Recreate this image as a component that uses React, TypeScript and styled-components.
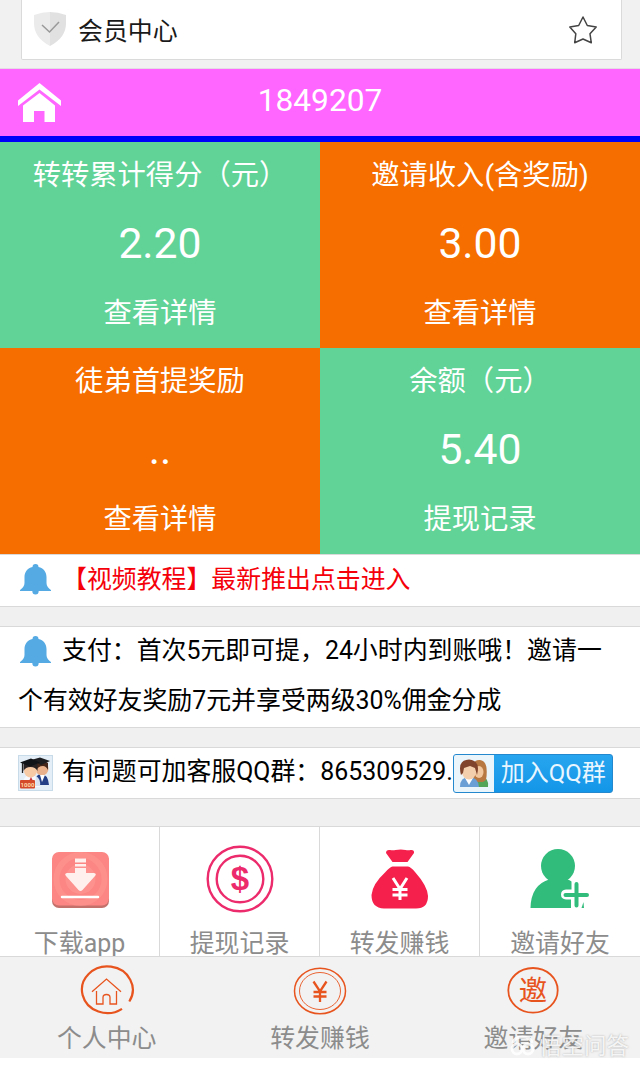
import React from 'react';
import styled, { createGlobalStyle } from 'styled-components';

const GlobalStyle = createGlobalStyle`
  * { box-sizing: border-box; }
  body {
    margin: 0;
    background: #fff;
    font-family: Roboto, "Noto Sans CJK SC", sans-serif;
    font-size: 24.9px;
    color: #000;
  }
  svg { display: block; flex: none; }
`;

const Page = styled.div`
  position: relative;
  width: 640px;
  height: 1067px;
  overflow: hidden;
  display: flex;
  flex-direction: column;
  background: #fff;
`;

const TopBar = styled.div`
  flex: none;
  height: 69px;
  padding: 0 18px 0 21px;
  background: #f1f1f1;
  border-bottom: 1px solid #e4dbe4;
`;

const AddressCard = styled.div`
  height: 60px;
  padding: 0 23px 0 12px;
  display: flex;
  align-items: center;
  background: #fff;
  border: 1px solid #dadada;
  border-top: 0;
  border-radius: 0 0 2px 2px;
  color: #1a1a1a;
`;

const AddressTitle = styled.span`
  flex: 1;
  margin-left: 12px;
  padding-top: 4px;
  line-height: 36px;
`;

const UserBar = styled.header`
  flex: none;
  height: 73px;
  padding: 0 18px;
  display: grid;
  grid-template-columns: 44px 1fr 44px;
  align-items: center;
  background: #ff66ff;
  border-bottom: 6px solid #0000fa;
`;

const UserId = styled.h1`
  margin: 0 0 3px;
  text-align: center;
  font-size: 31.7px;
  font-weight: 400;
  line-height: 40px;
  color: #fff;
`;

const TileGrid = styled.section`
  flex: none;
  display: grid;
  grid-template-columns: 1fr 1fr;
  grid-auto-rows: 206px;
`;

const Tile = styled.div<{ $color: string }>`
  padding-top: 14px;
  display: flex;
  flex-direction: column;
  align-items: center;
  background: ${(p) => p.$color};
  color: #fff;
  font-size: 28.3px;
  line-height: 40px;
`;

const TileValue = styled.strong`
  margin: 22px 0 26px;
  font-size: 42.7px;
  font-weight: 400;
  line-height: 50px;
`;

const Notice = styled.section<{ $height: number }>`
  flex: none;
  height: ${(p) => p.$height}px;
  margin-bottom: 20px;
  padding: 0 18px;
  background: #fff;
  border-top: 1px solid #d9d9d9;
  box-shadow: 0 1px 0 #d9d9d9;
  line-height: 50px;
  white-space: nowrap;
`;

const NoticeLine = styled.div<{ $color?: string }>`
  display: flex;
  align-items: center;
  height: 50px;
  color: ${(p) => p.$color || '#000'};
`;

const NoticeText = styled.span<{ $gap?: number; $lift?: number }>`
  margin-left: ${(p) => p.$gap ?? 9}px;
  padding-bottom: ${(p) => (p.$lift ?? 1) * 2}px;
`;

const Content = styled.div`
  flex: none;
  background: #f0f0f0;
`;

const JoinButton = styled.button`
  width: 160px;
  height: 39px;
  padding: 0;
  display: flex;
  align-items: center;
  overflow: hidden;
  background: linear-gradient(#27a5ee, #1496e8);
  border: 1px solid #2488cf;
  border-radius: 3px;
  color: #e9f6ff;
  font-family: inherit;
  font-size: 24px;
  line-height: 36px;
`;

const JoinLabel = styled.span`
  margin-left: 7px;
`;

const Shortcuts = styled.nav`
  height: 130px;
  margin-top: 28px;
  display: grid;
  grid-template-columns: repeat(4, 1fr);
  overflow: hidden;
  background: #fff;
  border-top: 1px solid #d9d9d9;
`;

const Shortcut = styled.a`
  padding-top: 18px;
  display: flex;
  flex-direction: column;
  align-items: center;
  color: #8c8c8c;
  line-height: 36px;
  border-right: 1px solid #d9d9d9;
  &:last-child { border-right: 0; }
`;

const ShortcutLabel = styled.span`
  margin-top: 9px;
`;

const TabBar = styled.nav`
  flex: none;
  height: 102px;
  display: grid;
  grid-template-columns: repeat(3, 1fr);
  background: #f2f2f2;
  border-top: 1px solid #d9d9d9;
`;

const Tab = styled.a`
  padding-top: 6px;
  display: flex;
  flex-direction: column;
  align-items: center;
  color: #8c8c8c;
  line-height: 36px;
`;

const TabLabel = styled.span`
  margin-top: 2px;
`;

const Watermark = styled.div`
  position: absolute;
  left: 509px;
  top: 1031px;
  display: flex;
  align-items: center;
  gap: 3px;
  color: rgba(255, 255, 255, 0.85);
  font-size: 22.5px;
  line-height: 30px;
  text-shadow: 0 0 2px rgba(150, 150, 150, 0.8);
`;

const Shield = () => (
  <svg width="32" height="35" viewBox="0 0 32 35">
    <path d="M0 3Q8 0 16 0V34C5 28 0 21 0 11Z" fill="#ebebeb" />
    <path d="M32 3Q24 0 16 0V34C27 28 32 21 32 11Z" fill="#e1e1e1" />
    <path d="M8 13l7.500 7L25 10" fill="none" stroke="#999" strokeWidth="1.500" />
  </svg>
);

const Star = () => (
  <svg width="30" height="30" viewBox="0 0 30 30">
    <path
      d="M15 2L19.300 10.500 28.200 12 22 18.800 23.300 27.800 15 24 6.700 27.800 7.800 18.800 1.800 12 10.700 10.500Z"
      fill="none" stroke="#444" strokeWidth="1.500" strokeLinejoin="round"
    />
  </svg>
);

const HomeSolid = () => (
  <svg width="44" height="40" viewBox="0 0 44 40">
    <path d="M0 17.500L21.500 0 43 17.500V23L21.500 6.500 0 23Z" fill="#fff" />
    <path d="M5 22.500L21.500 10 37 22.500V39H26.500V28H16V39H5Z" fill="#fff" />
  </svg>
);

const Bell = () => (
  <svg width="35" height="32" viewBox="0 0 35 32">
    <path
      d="M14.500 3a3 3 0 0 1 6 0C25.500 4 28.500 8 28.500 13V18.500C28.500 22.500 31 24.500 33 26V27H20.700a3.200 3.600 0 0 1-6.400 0H2V26C4 24.500 6.500 22.500 6.500 18.500V13C6.500 8 9.500 4 14.500 3Z"
      fill="#55aae4"
    />
  </svg>
);

const Graduates = () => (
  <svg width="35" height="36" viewBox="0 0 35 36">
    <rect x="0.500" y="0.500" width="34" height="35" fill="#e3eef7" stroke="#c8dbe8" />
    <path d="M16 30q1-11 7-11 7 0 8 11Z" fill="#243f86" />
    <circle cx="24" cy="14" r="6.500" fill="#e9b28c" />
    <path d="M17 16V8q7-5 13 0v7q-2-4-5-4-5 0-7 5Z" fill="#45261b" />
    <path d="M13 5l9-2.500L32 6l-9 4Z" fill="#1c1d20" />
    <path d="M22 20l2 7 3-7" fill="#fff" />
    <path d="M5 32q-1-12 8-12 8 0 9 12Z" fill="#f7f8fb" />
    <path d="M18 21q5 3 4 10h-5Z" fill="#d9e2f0" />
    <circle cx="12.500" cy="16" r="6.500" fill="#f7caa6" />
    <path d="M5.500 16V9q7-4 14 0v7q-2-4-7-4t-7 4Z" fill="#272124" />
    <path d="M2 7.500l11-4 9 4-10 4Z" fill="#101318" />
    <path d="M4.500 8v10" stroke="#222" strokeWidth="1.300" />
    <path d="M13 22l-2 4 2 3 2-3Z" fill="#c7373d" />
    <rect x="2" y="25" width="15" height="8.500" rx="1" fill="#d5492b" />
    <text x="9.500" y="31.500" textAnchor="middle" fontSize="6" fontWeight="700" fill="#ffd8a8">1000</text>
  </svg>
);

const Friends = () => (
  <svg width="40" height="37" viewBox="0 0 40 37">
    <rect width="40" height="37" fill="#eaf4fb" />
    <path d="M19 32q0-10 8-10t7 10Z" fill="#55a558" />
    <path d="M19 23Q16 4 26 5q9 1 6 20l-3 2H21Z" fill="#b87842" />
    <ellipse cx="25" cy="17" rx="4.500" ry="6" fill="#f1c79f" />
    <path d="M6 32q0-10 9-10t10 10Z" fill="#6a9fd5" />
    <path d="M11 23l4 7 4-7" fill="#fff" />
    <ellipse cx="15" cy="16.500" rx="7" ry="8" fill="#f3cfad" />
    <path d="M7 20Q3 5 15 4.500q12 1 8 15.500l-2-7-5-2-6 2-1 5Z" fill="#80432c" />
  </svg>
);

const Download = () => (
  <svg width="68" height="72" viewBox="0 0 68 72">
    <rect x="6" y="9" width="57" height="54" rx="7" fill="#c4716c" />
    <rect x="6" y="7" width="57" height="53.500" rx="7" fill="#fb8683" />
    <circle cx="34.500" cy="34" r="24" fill="none" stroke="#ff9a94" strokeWidth="6" opacity=".5" />
    <circle cx="34.500" cy="34" r="15" fill="#ff9994" opacity=".6" />
    <path d="M29 13.500h11v4H29zM29 19h11v2.500H29zM29 23h11v5h8q3 .5 1 3L36.500 45q-2 2-4 0L20 31q-2-2.500 1-3h8Z" fill="#fff0ee" />
    <path d="M16 52h36" stroke="#fff" strokeWidth="2.500" strokeLinecap="round" />
  </svg>
);

const Dollar = () => (
  <svg width="68" height="72" viewBox="0 0 68 72">
    <g fill="none" stroke="#ec2b6c" strokeWidth="2.400">
      <circle cx="34" cy="34" r="32.300" />
      <circle cx="34" cy="34" r="23.300" />
    </g>
    <text x="34" y="45" textAnchor="middle" fontFamily="Liberation Sans" fontSize="33" fontWeight="700" fill="#ec2b6c">$</text>
  </svg>
);

const MoneyBag = () => (
  <svg width="68" height="72" viewBox="0 0 68 72">
    <path d="M20 8Q20 4.500 24 5q3 .5 5.500 0 5.500-1 10 0 3 .5 5 0 4-.5 3.500 3L41.500 17H26.500Z" fill="#f5204c" />
    <path d="M26.500 21.500H42Q45 22 49 27 61.500 41 62 51 62 63.500 50 63.500H18Q5.500 63 5.500 50 6.500 39 19 27.500 24 22 26.500 21.500Z" fill="#f5204c" />
    <path d="M27 33l7 11 7-11M34 43v12M26.500 44.500h15M26.500 50h15" fill="none" stroke="#fff" strokeWidth="3" />
  </svg>
);

const AddFriend = () => (
  <svg width="68" height="72" viewBox="0 0 68 72">
    <circle cx="32" cy="21" r="17" fill="#31bc7c" />
    <path d="M4.500 63Q5 40 23 34.500V30h18v4.500q3 .5 4.500 2v8H40q-5 .5-5 5t5 5h5v8.500Z" fill="#31bc7c" />
    <path d="M50.500 39v21.500M39.500 50H61" stroke="#31bc7c" strokeWidth="4" strokeLinecap="round" />
    <path d="M55.500 63l2-6 .5 6Z" fill="#31bc7c" />
  </svg>
);

const HomeTabIcon = () => (
  <svg width="56" height="56" viewBox="0 0 56 56">
    <path d="M43 45.800A25.400 23.300 0 1 1 50.300 38.500" fill="none" stroke="#e8541e" strokeWidth="2.200" />
    <path d="M13 28.800L27.500 16 42 28.800M17.500 28V41H24V34.500q0-3 3.500-3t3.500 3V41H37.500V28" fill="none" stroke="#e8541e" strokeWidth="1.300" />
  </svg>
);

const CoinTabIcon = () => (
  <svg width="56" height="56" viewBox="0 0 56 56">
    <g fill="none" stroke="#e8541e">
      <ellipse cx="28" cy="28" rx="25.500" ry="22.800" strokeWidth="1.500" />
      <ellipse cx="28" cy="28" rx="20.500" ry="18.500" strokeWidth="0.900" />
      <path d="M21.500 18.500l6.500 10 6.500-10M28 28v11M21.500 29h13M21.500 33.500h13" strokeWidth="2.300" />
    </g>
  </svg>
);

const InviteTabIcon = () => (
  <svg width="56" height="56" viewBox="0 0 56 56">
    <ellipse cx="28" cy="27.300" rx="24.700" ry="22.300" fill="none" stroke="#e8541e" strokeWidth="1.800" />
    <text x="28" y="38" textAnchor="middle" fontSize="28.500" fill="#e8541e">邀</text>
  </svg>
);

const WatermarkLogo = () => (
  <svg width="27" height="24" viewBox="0 0 27 24">
    <g fill="none" stroke="#fff" strokeWidth="3" opacity=".85">
      <path d="M4 9Q5 3 13.500 3T23 9" />
      <circle cx="8" cy="15" r="5" />
      <circle cx="19" cy="15" r="5" />
    </g>
  </svg>
);

const GREEN = '#61d397';
const ORANGE = '#f66d00';

const tiles = [
  { title: '转转累计得分（元）', value: '2.20', link: '查看详情', color: GREEN },
  { title: '邀请收入(含奖励)', value: '3.00', link: '查看详情', color: ORANGE },
  { title: '徒弟首提奖励', value: '..', link: '查看详情', color: ORANGE },
  { title: '余额（元）', value: '5.40', link: '提现记录', color: GREEN },
];

const shortcuts = [
  { label: '下载app', icon: <Download /> },
  { label: '提现记录', icon: <Dollar /> },
  { label: '转发赚钱', icon: <MoneyBag /> },
  { label: '邀请好友', icon: <AddFriend /> },
];

const tabs = [
  { label: '个人中心', icon: <HomeTabIcon /> },
  { label: '转发赚钱', icon: <CoinTabIcon /> },
  { label: '邀请好友', icon: <InviteTabIcon /> },
];

export default function App() {
  return (
    <Page>
      <GlobalStyle />
      <TopBar>
        <AddressCard>
          <Shield />
          <AddressTitle>会员中心</AddressTitle>
          <Star />
        </AddressCard>
      </TopBar>
      <UserBar>
        <HomeSolid />
        <UserId>1849207</UserId>
      </UserBar>
      <TileGrid>
        {tiles.map((t) => (
          <Tile key={t.title} $color={t.color}>
            <span>{t.title}</span>
            <TileValue>{t.value}</TileValue>
            <span>{t.link}</span>
          </Tile>
        ))}
      </TileGrid>
      <Content>
        <Notice $height={52}>
          <NoticeLine $color="#f5000a">
            <Bell />
            <NoticeText $lift={0}>【视频教程】最新推出点击进入</NoticeText>
          </NoticeLine>
        </Notice>
        <Notice $height={101}>
          <NoticeLine>
            <Bell />
            <NoticeText>支付：首次5元即可提，24小时内到账哦！邀请一</NoticeText>
          </NoticeLine>
          <NoticeLine>
            <NoticeText $gap={0}>个有效好友奖励7元并享受两级30%佣金分成</NoticeText>
          </NoticeLine>
        </Notice>
        <Notice $height={51}>
          <NoticeLine>
            <Graduates />
            <NoticeText>有问题可加客服QQ群：865309529.</NoticeText>
            <JoinButton>
              <Friends />
              <JoinLabel>加入QQ群</JoinLabel>
            </JoinButton>
          </NoticeLine>
        </Notice>
        <Shortcuts>
          {shortcuts.map((s) => (
            <Shortcut key={s.label}>
              {s.icon}
              <ShortcutLabel>{s.label}</ShortcutLabel>
            </Shortcut>
          ))}
        </Shortcuts>
      </Content>
      <TabBar>
        {tabs.map((t) => (
          <Tab key={t.label}>
            {t.icon}
            <TabLabel>{t.label}</TabLabel>
          </Tab>
        ))}
      </TabBar>
      <Watermark>
        <WatermarkLogo />
        悟空问答
      </Watermark>
    </Page>
  );
}
